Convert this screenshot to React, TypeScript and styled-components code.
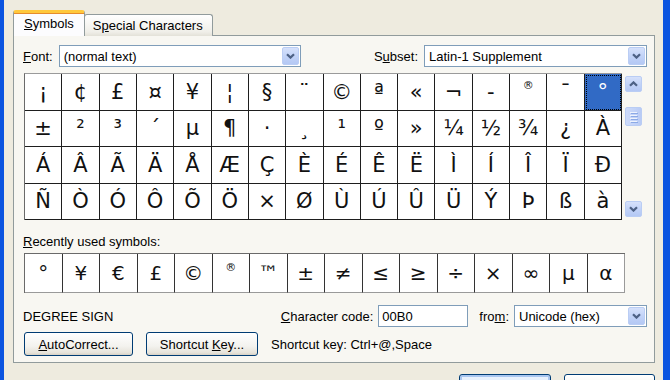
import React from 'react';
import styled, { createGlobalStyle, css } from 'styled-components';

const GlobalStyle = createGlobalStyle`
  html, body {
    margin: 0;
    padding: 0;
    background: #ece9d8;
  }
  body {
    font-family: 'Liberation Sans', Arial, sans-serif;
    font-size: 13px;
    color: #000;
  }
`;

const Window = styled.div`
  width: 670px;
  height: 380px;
  box-sizing: border-box;
  overflow: hidden;
  border-left: 4px solid #0b54e0;
  border-right: 7px solid #0b54e0;
  background: #eeebdf;
  padding: 10px 8px 0 9px;
  display: flex;
  flex-direction: column;
`;

const TabRow = styled.div`
  display: flex;
  align-items: flex-end;
  height: 26px;
  margin-bottom: -1px;
  position: relative;
  z-index: 1;
`;

const Tab = styled.div<{ $active?: boolean }>`
  box-sizing: border-box;
  display: flex;
  align-items: center;
  border: 1px solid #919b9c;
  border-radius: 3px 3px 0 0;
  white-space: nowrap;
  ${p =>
    p.$active
      ? css`
          height: 26px;
          padding: 0 10px 2px 10px;
          background: #fcfcfe;
          border-bottom: none;
          border-top: 3px solid #ffc83c;
          box-shadow: inset 0 1px 0 #e68b2c;
        `
      : css`
          height: 22px;
          padding: 0 9px 0 8px;
          margin-left: -1px;
          background: linear-gradient(#ffffff, #f0efe9 80%, #e3e1d8);
          border-bottom: none;
        `}
`;

const Key = styled.span`
  text-decoration: underline;
`;

const Panel = styled.div`
  box-sizing: border-box;
  width: 642px;
  height: 328px;
  flex: 0 0 328px;
  border: 1px solid #919b9c;
  background: #f8f7f2;
  padding: 9px 7px 0 9px;
  display: flex;
  flex-direction: column;
`;

const FontRow = styled.div`
  display: flex;
  justify-content: space-between;
  align-items: center;
  height: 22px;
`;

const Field = styled.div`
  display: flex;
  align-items: center;
  gap: 6px;
`;

const Label = styled.span`
  white-space: nowrap;
`;

const SelectBox = styled.div<{ $w: number }>`
  box-sizing: border-box;
  width: ${p => p.$w}px;
  height: 22px;
  border: 1px solid #7f9db9;
  background: #fff;
  display: flex;
  align-items: center;
  padding: 1px;
`;

const SelectText = styled.span`
  flex: 1;
  padding-left: 3px;
  white-space: nowrap;
`;

const ArrowButton = styled.div<{ $h?: number }>`
  box-sizing: border-box;
  width: 17px;
  height: ${p => p.$h ?? 18}px;
  border: 1px solid #bacdf4;
  border-radius: 2px;
  background: linear-gradient(#d6e1fb, #c2d3f8 50%, #b4c8f4);
  display: flex;
  align-items: center;
  justify-content: center;
`;

const Chevron: React.FC<{ up?: boolean }> = ({ up }) => (
  <svg width="9" height="6" viewBox="0 0 9 6" style={up ? { transform: 'rotate(180deg)' } : undefined}>
    <path d="M1 1.2 L4.5 4.6 L8 1.2" stroke="#4d6185" strokeWidth="2.2" fill="none" />
  </svg>
);

const Dropdown: React.FC<{ w: number; value: string }> = ({ w, value }) => (
  <SelectBox $w={w}>
    <SelectText>{value}</SelectText>
    <ArrowButton>
      <Chevron />
    </ArrowButton>
  </SelectBox>
);

const GridArea = styled.div`
  display: flex;
  margin: 6px 0 0 1px;
  height: 147px;
`;

const CharGrid = styled.div<{ $rows: number }>`
  box-sizing: border-box;
  width: 598px;
  display: grid;
  grid-template-columns: repeat(16, 1fr);
  grid-template-rows: repeat(${p => p.$rows}, 1fr);
  border-top: 1px solid #9a9a9a;
  border-left: 1px solid #6a6a6a;
  background: #fff;
`;

const Cell = styled.div<{ $selected?: boolean; $size: number }>`
  box-sizing: border-box;
  border-right: 1px solid #1e1e1e;
  border-bottom: 1px solid #1e1e1e;
  display: flex;
  align-items: center;
  justify-content: center;
  font-family: 'DejaVu Sans', 'Noto Sans', sans-serif;
  font-size: ${p => p.$size}px;
  color: #111;
  ${p =>
    p.$selected &&
    css`
      background: #316ac5;
      color: #fff;
      outline: 1px dotted #000;
      outline-offset: -2px;
    `}
`;

/* the registered sign is drawn small and raised in this font */
const SmallMark = styled.span`
  font-size: 11px;
  position: relative;
  top: -6px;
`;

const Scrollbar = styled.div`
  box-sizing: border-box;
  width: 21px;
  padding: 3px 0 3px 3px;
  display: flex;
  flex-direction: column;
`;

const Thumb = styled.div`
  box-sizing: border-box;
  width: 17px;
  height: 19px;
  margin-top: 15px;
  border: 1px solid #bacdf4;
  border-radius: 2px;
  background: linear-gradient(90deg, #cddaf9, #c4d4f8 50%, #b9cbf5);
  display: flex;
  flex-direction: column;
  align-items: center;
  justify-content: center;
  gap: 2px;
`;

const Grip = styled.div`
  width: 7px;
  height: 1px;
  background: #eef3fd;
  box-shadow: 1px 1px 0 #8caae6;
`;

const Spacer = styled.div`
  flex: 1;
`;

const SectionLabel = styled.div`
  margin-top: 14px;
  height: 16px;
  line-height: 16px;
`;

const RecentArea = styled.div`
  margin: 3px 0 0 1px;
  height: 40px;
  display: flex;
`;

const RecentGrid = styled(CharGrid)`
  width: 601px;
  border-top-color: #6a6a6a;
  ${Cell} {
    border-right-color: #333;
    border-bottom-color: #9a9a9a;
  }
  & > ${Cell}:last-child {
    border-right-color: #9a9a9a;
  }
`;

const InfoRow = styled.div`
  display: flex;
  align-items: center;
  height: 22px;
  margin-top: 12px;
`;

const Description = styled.span`
  flex: 1;
`;

const CodeInput = styled.div`
  box-sizing: border-box;
  width: 90px;
  height: 22px;
  margin-left: 5px;
  border: 1px solid #7f9db9;
  background: #fff;
  display: flex;
  align-items: center;
  padding-left: 3px;
`;

const FromLabel = styled(Label)`
  margin: 0 5px 0 11px;
`;

const ButtonRow = styled.div`
  display: flex;
  align-items: center;
  gap: 13px;
  margin: 5px 0 0 1px;
`;

const Button = styled.div<{ $w: number; $default?: boolean }>`
  box-sizing: border-box;
  width: ${p => p.$w}px;
  height: 24px;
  flex: 0 0 auto;
  border: 1px solid #003c74;
  border-radius: 3px;
  background: linear-gradient(#ffffff, #f3f2ee 60%, #e6e3da 90%, #d6d0c5);
  display: flex;
  align-items: center;
  justify-content: center;
  white-space: nowrap;
  ${p =>
    p.$default &&
    css`
      box-shadow: inset 0 0 0 2px #a9c6f0;
      background: linear-gradient(#eaf2fd, #dce8fb);
    `}
`;

const FooterRow = styled.div`
  display: flex;
  justify-content: flex-end;
  gap: 13px;
  margin-top: 11px;
`;

const rows = [
  ['¡', '¢', '£', '¤', '¥', '¦', '§', '¨', '©', 'ª', '«', '¬', '-', '®', '¯', '°'],
  ['±', '²', '³', '´', 'µ', '¶', '·', '¸', '¹', 'º', '»', '¼', '½', '¾', '¿', 'À'],
  ['Á', 'Â', 'Ã', 'Ä', 'Å', 'Æ', 'Ç', 'È', 'É', 'Ê', 'Ë', 'Ì', 'Í', 'Î', 'Ï', 'Ð'],
  ['Ñ', 'Ò', 'Ó', 'Ô', 'Õ', 'Ö', '×', 'Ø', 'Ù', 'Ú', 'Û', 'Ü', 'Ý', 'Þ', 'ß', 'à'],
];

const recent = ['°', '¥', '€', '£', '©', '®', '™', '±', '≠', '≤', '≥', '÷', '×', '∞', 'µ', 'α'];

const glyph = (ch: string) => (ch === '®' ? <SmallMark>{ch}</SmallMark> : ch);

export default function App() {
  return (
    <>
      <GlobalStyle />
      <Window>
        <TabRow>
          <Tab $active>
            <span><Key>S</Key>ymbols</span>
          </Tab>
          <Tab>
            <span>S<Key>p</Key>ecial Characters</span>
          </Tab>
        </TabRow>
        <Panel>
          <FontRow>
            <Field>
              <Label><Key>F</Key>ont:</Label>
              <Dropdown w={242} value="(normal text)" />
            </Field>
            <Field>
              <Label>S<Key>u</Key>bset:</Label>
              <Dropdown w={223} value="Latin-1 Supplement" />
            </Field>
          </FontRow>

          <GridArea>
            <CharGrid $rows={4}>
              {rows.flat().map((ch, i) => (
                <Cell key={i} $size={21} $selected={i === 15}>
                  {glyph(ch)}
                </Cell>
              ))}
            </CharGrid>
            <Scrollbar>
              <ArrowButton $h={16}>
                <Chevron up />
              </ArrowButton>
              <Thumb>
                <Grip />
                <Grip />
                <Grip />
                <Grip />
              </Thumb>
              <Spacer />
              <ArrowButton $h={16}>
                <Chevron />
              </ArrowButton>
            </Scrollbar>
          </GridArea>

          <SectionLabel><Key>R</Key>ecently used symbols:</SectionLabel>
          <RecentArea>
            <RecentGrid $rows={1}>
              {recent.map((ch, i) => (
                <Cell key={i} $size={20}>
                  {glyph(ch)}
                </Cell>
              ))}
            </RecentGrid>
          </RecentArea>

          <InfoRow>
            <Description>DEGREE SIGN</Description>
            <Label><Key>C</Key>haracter code:</Label>
            <CodeInput>00B0</CodeInput>
            <FromLabel>fro<Key>m</Key>:</FromLabel>
            <Dropdown w={133} value="Unicode (hex)" />
          </InfoRow>

          <ButtonRow>
            <Button $w={109}><span><Key>A</Key>utoCorrect...</span></Button>
            <Button $w={112}><span>Shortcut <Key>K</Key>ey...</span></Button>
            <Label>Shortcut key: Ctrl+@,Space</Label>
          </ButtonRow>
        </Panel>
        <FooterRow>
          <Button $w={92} $default />
          <Button $w={91} />
        </FooterRow>
      </Window>
    </>
  );
}
